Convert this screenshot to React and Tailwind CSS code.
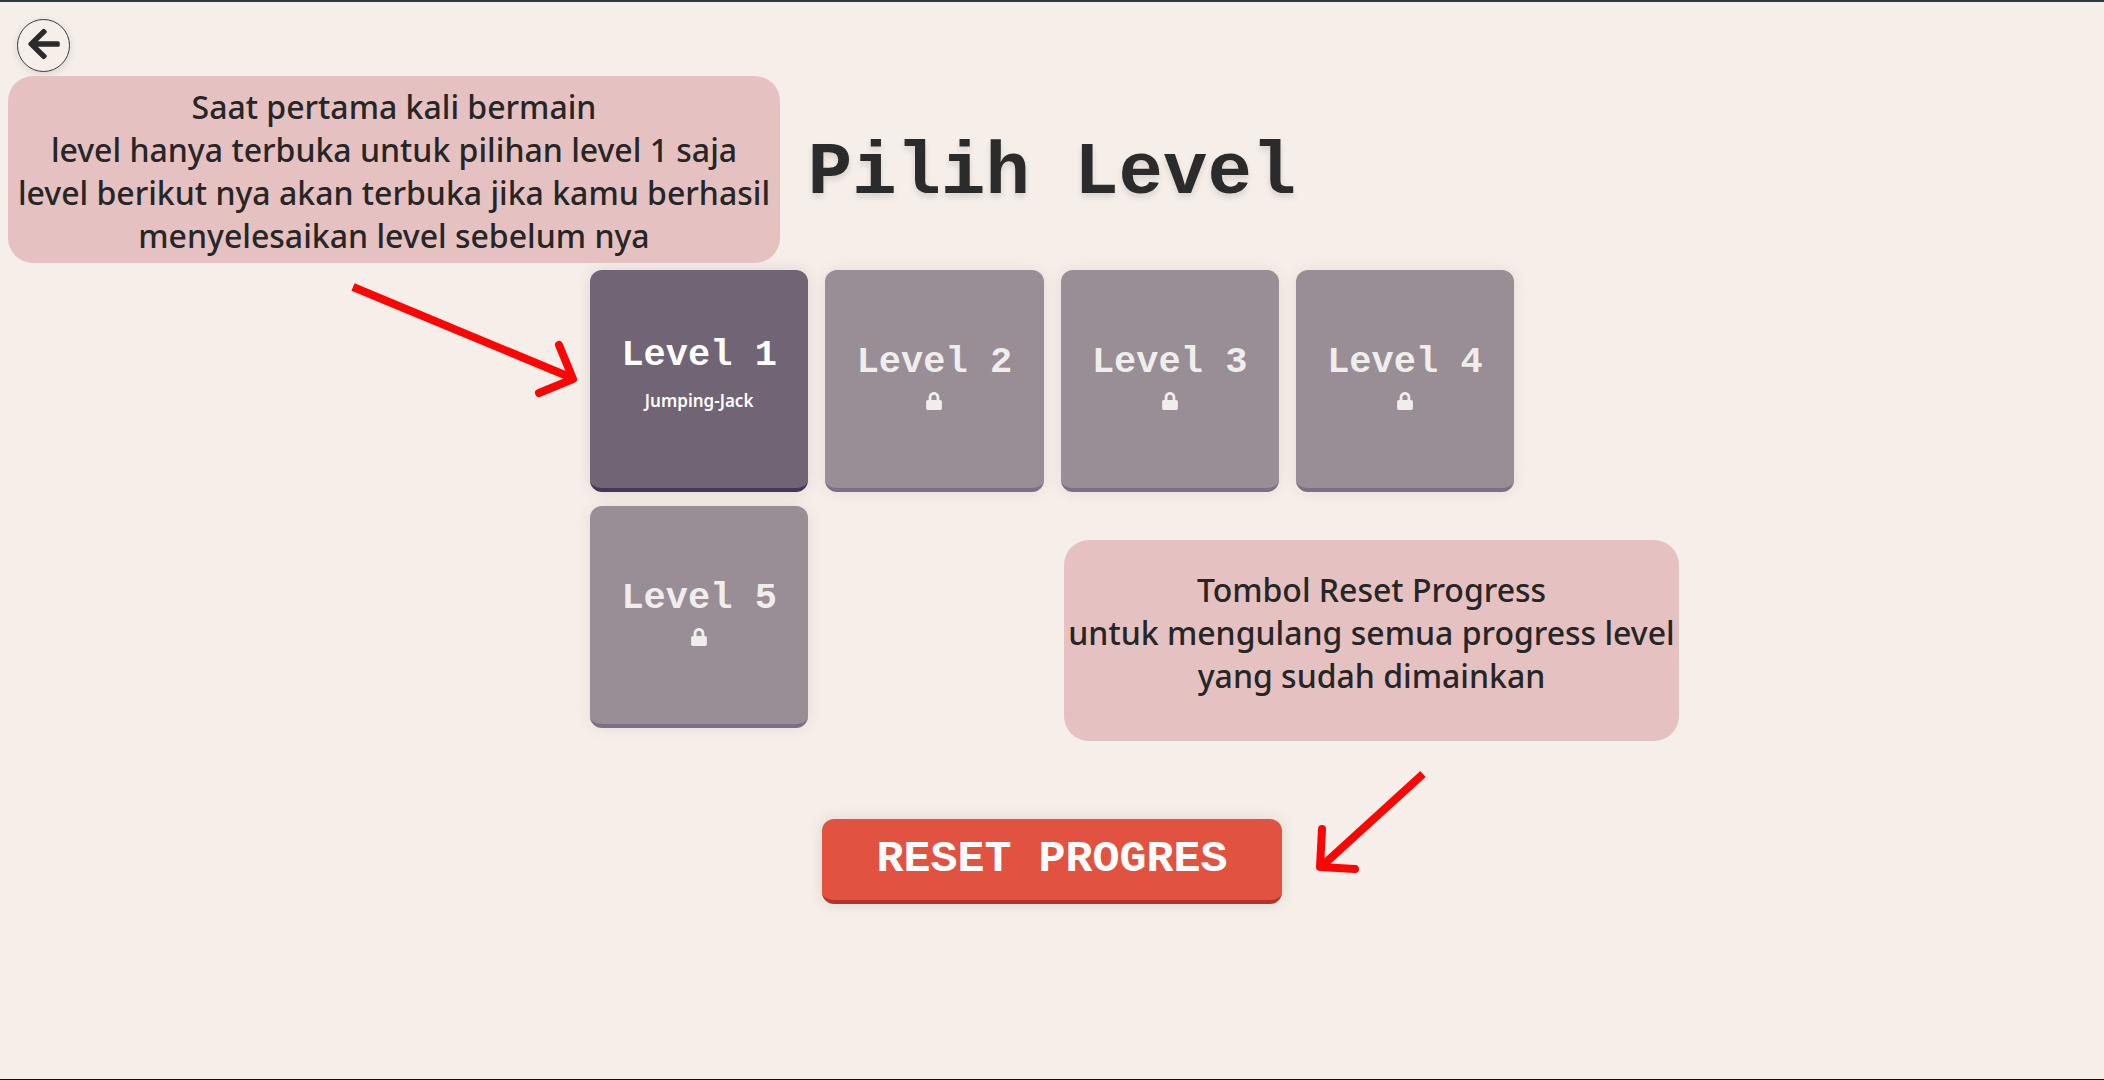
import { FaLock, FaArrowLeft } from 'react-icons/fa';

const levels = [
  { name: 'Level 1', move: 'Jumping-Jack' },
  { name: 'Level 2' },
  { name: 'Level 3' },
  { name: 'Level 4' },
  { name: 'Level 5' },
];

function LevelCard({ level }) {
  const open = Boolean(level.move);
  return (
    <button
      type="button"
      disabled={!open}
      aria-label={open ? undefined : `${level.name} terkunci`}
      className={
        open
          ? 'flex h-[222px] flex-col items-center justify-center gap-3 rounded-xl border-b-4 border-[#483659] bg-[#716474] pb-1 text-white shadow-[0_0_16px_rgba(0,0,0,0.1)]'
          : 'flex h-[222px] flex-col items-center justify-center gap-3 rounded-xl border-b-4 border-[#7e6e86] bg-[#998d96] pb-1 text-[#f0eeec] shadow-[0_0_16px_rgba(0,0,0,0.08)]'
      }
    >
      <span className="font-['Liberation_Mono',monospace] text-[37px] leading-9 font-bold">{level.name}</span>
      {open ? (
        <span className="font-['Noto_Sans','Open_Sans',sans-serif] text-[17px] leading-8 font-semibold">{level.move}</span>
      ) : (
        <FaLock className="size-[18px]" />
      )}
    </button>
  );
}

function Note({ lines, className }) {
  return (
    <aside className={className}>
      {lines.map((line) => (
        <p key={line} className="whitespace-nowrap">{line}</p>
      ))}
    </aside>
  );
}

export default function App() {
  return (
    <main className="relative flex min-h-screen flex-col items-center overflow-hidden border-t-2 border-b border-t-[#2c3b40] border-b-[#111111] bg-[#f6eee9] text-[#2b2b2b]">
      <header className="flex w-full px-[17px] pt-[17px]">
        <button
          type="button"
          aria-label="Kembali"
          className="flex size-[53px] items-center justify-center rounded-full border border-[#3a3a3a] pb-1 shadow-[0_2px_8px_rgba(0,0,0,0.12)]"
        >
          <FaArrowLeft className="size-9" />
        </button>
      </header>

      <h1 className="mt-[61px] font-['Liberation_Mono',monospace] text-[74px] leading-[80px] font-bold [text-shadow:0_4px_6px_rgba(0,0,0,0.12)]">
        Pilih Level
      </h1>

      <section className="relative mt-[57px] w-full max-w-[924px]">
        <div className="grid grid-cols-4 gap-x-[17px] gap-y-[14px]">
          {levels.map((level) => (
            <LevelCard key={level.name} level={level} />
          ))}
        </div>

        <svg viewBox="0 0 240 130" className="absolute top-0 -left-[240px] h-[130px] w-60" fill="none" stroke="#fb0505" strokeWidth="8" aria-hidden="true">
          <path d="M3 17 L222 108" />
          <path d="M209 75 L223 109 L189 123" strokeLinecap="round" strokeLinejoin="round" />
        </svg>

        <Note
          className="absolute top-[270px] left-[474px] h-[201px] w-[615px] rounded-[25px] bg-[#e6c1c1] pt-7 text-center font-['Noto_Sans',sans-serif] text-[32px] leading-[43px] font-medium text-[#262626]"
          lines={['Tombol Reset Progress', 'untuk mengulang semua progress level', 'yang sudah dimainkan']}
        />

        <svg viewBox="0 0 120 110" className="absolute top-[498px] left-[720px] h-[110px] w-[120px]" fill="none" stroke="#fb0505" strokeWidth="8" aria-hidden="true">
          <path d="M113 6 L12 98" />
          <path d="M12 61 L10 99 L45 101" strokeLinecap="round" strokeLinejoin="round" />
        </svg>
      </section>

      <button
        type="button"
        className="mt-[91px] h-[85px] rounded-xl border-b-4 border-[#b2332c] bg-[#e15241] px-[54px] font-['Liberation_Mono',monospace] text-[45px] font-bold text-white shadow-[0_0_16px_rgba(0,0,0,0.1)]"
      >
        RESET PROGRES
      </button>

      <Note
        className="absolute top-[74px] left-2 h-[187px] w-[772px] rounded-[25px] bg-[#e6c1c1] pt-[9px] text-center font-['Noto_Sans',sans-serif] text-[32px] leading-[43px] font-medium text-[#262626]"
        lines={[
          'Saat pertama kali bermain',
          'level hanya terbuka untuk pilihan level 1 saja',
          'level berikut nya akan terbuka jika kamu berhasil',
          'menyelesaikan level sebelum nya',
        ]}
      />
    </main>
  );
}
